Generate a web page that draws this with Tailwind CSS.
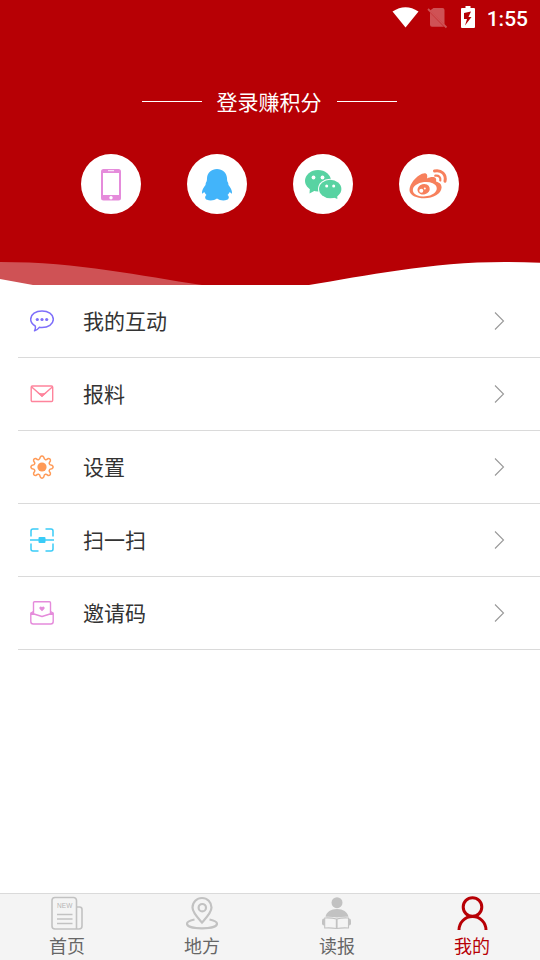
<!DOCTYPE html>
<html lang="zh-CN">
<head>
<meta charset="utf-8">
<meta name="viewport" content="width=device-width, initial-scale=1">
<title>我的</title>
<script src="https://cdn.jsdelivr.net/npm/@tailwindcss/browser@4"></script>
</head>
<body class="flex min-h-screen flex-col bg-white font-['Noto_Sans_CJK_SC',sans-serif] text-[#333333]">

<header class="flex flex-col bg-[#b70005] text-white">
  <div class="flex h-9 items-center justify-end pr-3">
    <svg class="h-9 w-7" viewBox="0 0 28 36" fill="#fff" aria-hidden="true"><path d="M.5 11.500Q13.500 3 26.500 11.500L13.500 27.500Z"/></svg>
    <svg class="ml-1 h-9 w-6" viewBox="0 0 24 36" aria-hidden="true"><path d="M9.500 8H18.500a2 2 0 0 1 2 2V24.500L6 10.500ZM6 12.500L20 26.800H8a2 2 0 0 1-2-2Z" fill="#cf5255"/><path d="M4 9L22.500 27.500" stroke="#cf5255" stroke-width="1.800"/></svg>
    <svg class="ml-3 h-9 w-5" viewBox="0 0 20 36" aria-hidden="true"><path d="M5.500 6h5V8H14a1 1 0 0 1 1 1V27a1 1 0 0 1-1 1H2a1 1 0 0 1-1-1V9a1 1 0 0 1 1-1H5.500Z" fill="#fff"/><path d="M11 11.500L4 13V19H7L5 25.500L11.500 17H8.500Z" fill="#b70005"/></svg>
    <time class="ml-[7px] pt-0.5 font-[Roboto,sans-serif] text-[21px] leading-6 font-medium">1:55</time>
  </div>

  <div class="mt-[49px] flex items-center justify-center gap-[15px] pr-0.5">
    <span class="h-px w-[60px] bg-white"></span>
    <h1 class="text-[21px] leading-8">登录赚积分</h1>
    <span class="h-px w-[60px] bg-white"></span>
  </div>

  <div class="mt-[37px] flex justify-center gap-[46px]">
    <button type="button" aria-label="手机登录" class="size-[60px] rounded-full bg-white">
      <svg class="size-full" viewBox="0 0 60 60" aria-hidden="true"><rect x="20" y="15" width="20" height="31.500" rx="2.500" fill="#e58bdb"/><path d="M22 19H38V41H22Z" fill="#fff"/><path d="M27 16.700h6" stroke="#fff" stroke-width=".9"/><circle cx="30" cy="43.800" r="1.700" fill="#fff"/></svg>
    </button>
    <button type="button" aria-label="QQ登录" class="size-[60px] rounded-full bg-white">
      <svg class="size-full" viewBox="0 0 60 60" aria-hidden="true"><path d="M30 15C35.500 15 39.500 18.500 40 24C40 26 40.300 27.500 41 28.500C41.500 29.500 41.300 30.500 41.500 31C43.500 33.500 45.200 36.500 45 39C44.800 40 44 39.500 43 38C42.500 38.200 42 39.500 40.500 41C42.500 42.500 42.200 45 40 45.800C37 47 32.500 46.500 30 44.500C27.500 46.500 23 47 20 45.800C17.800 45 17.500 42.500 19.500 41C18 39.500 17.500 38.200 17 38C16 39.500 15.200 40 15 39C14.800 36.500 16.500 33.500 18.500 31C18.700 30.500 18.500 29.500 19 28.500C19.700 27.500 20 26 20 24C20.500 18.500 24.500 15 30 15Z" fill="#42b4fa"/></svg>
    </button>
    <button type="button" aria-label="微信登录" class="size-[60px] rounded-full bg-white">
      <svg class="size-full" viewBox="0 0 60 60" aria-hidden="true"><g fill="#58d3a2"><ellipse cx="25" cy="26.700" rx="13" ry="10.700"/><path d="M17 33L16.500 39.500L23 36Z"/></g><ellipse cx="37.200" cy="35" rx="12.200" ry="10.200" fill="#fff"/><g fill="#58d3a2"><ellipse cx="37.200" cy="35" rx="11.200" ry="9.200"/><path d="M38.500 42.500L44.300 45V40Z"/></g><g fill="#fff"><circle cx="20.500" cy="23.500" r="1.900"/><circle cx="29.500" cy="23.500" r="1.900"/><circle cx="33.700" cy="32" r="1.500"/><circle cx="40.700" cy="32" r="1.500"/></g></svg>
    </button>
    <button type="button" aria-label="微博登录" class="size-[60px] rounded-full bg-white">
      <svg class="size-full" viewBox="0 0 60 60" aria-hidden="true"><path d="M10.500 36C10.500 30 17 22.500 23 19.800C27.500 18 29 20.500 28 24.500C32 22.500 38.500 22 37 27.500C39.500 28.300 42.700 29.500 42.600 33.500C42.300 40 34 44.300 25.500 44.300C17.500 44.300 10.500 41.500 10.500 36Z" fill="#f7805c"/><ellipse cx="25.800" cy="35.200" rx="12" ry="7.200" transform="rotate(-6 25.800 35.200)" fill="#fff"/><ellipse cx="24.600" cy="35.300" rx="6.200" ry="5.200" transform="rotate(-15 24.600 35.300)" fill="#f7805c"/><circle cx="22.300" cy="36.800" r="2" fill="#fff"/><circle cx="25.800" cy="34.500" r="1" fill="#fff"/><g fill="none" stroke="#f7805c" stroke-linecap="round"><path d="M35.500 17C42.500 15.500 47.500 20.500 46 27.200" stroke-width="3"/><path d="M36.300 21.700C39.800 21 42 23.500 41.300 26.500" stroke-width="2.200"/></g></svg>
    </button>
  </div>

  <svg class="mt-12 h-[23px] w-full" viewBox="0 0 540 23" preserveAspectRatio="none" aria-hidden="true">
    <path d="M0 0C80 0 140 14 202 23H0Z" fill="#cf5255"/>
    <path d="M0 17L33 23H0Z" fill="#fff"/>
    <path d="M309 23C365 14 430 0 505 0Q523 0 540 .8V23Z" fill="#fff"/>
  </svg>
</header>

<main class="flex-1">
  <nav aria-label="菜单" class="flex flex-col pl-[18px] text-[21px] leading-[30px]">
    <a href="#interact" class="flex items-center border-b border-[#dadada] py-5 pr-[35px] pl-3">
      <svg class="size-6" viewBox="0 0 24 24" fill="none" stroke="#7e6ffa" stroke-width="1.500" aria-hidden="true"><path d="M12 2C18 2 23.300 5.200 23.300 10.300S18 18.600 12 18.600C11 18.600 10 18.500 9.300 18.300C8 20.200 6.300 21.200 4.500 21.800C5.500 20 5.700 18.500 5.200 17C2.500 15.400.7 13 .7 10.300C.7 5.200 6 2 12 2Z" stroke-linejoin="round"/><g fill="#7e6ffa" stroke="none"><circle cx="7.300" cy="10.500" r="1.600"/><circle cx="12" cy="10.500" r="1.600"/><circle cx="16.700" cy="10.500" r="1.600"/></g></svg>
      <span class="ml-[29px] flex-1 pb-0.5">我的互动</span>
      <svg class="h-5 w-3" viewBox="0 0 12 20" fill="none" stroke="#999" stroke-width="1.100" aria-hidden="true"><path d="M2 1.500L10.500 10L2 18.500"/></svg>
    </a>
    <a href="#report" class="flex items-center border-b border-[#dadada] py-5 pr-[35px] pl-3">
      <svg class="size-6" viewBox="0 0 24 24" fill="none" stroke="#fe849c" stroke-width="1.400" aria-hidden="true"><rect x="1.200" y="4" width="21.500" height="15.500" rx="1.200"/><path d="M1.700 5L12 14L22.300 5"/><path d="M7 10.500Q12 12 17 10.500L12 15Z" fill="#fe849c" stroke="none"/></svg>
      <span class="ml-[29px] flex-1 pb-0.5">报料</span>
      <svg class="h-5 w-3" viewBox="0 0 12 20" fill="none" stroke="#999" stroke-width="1.100" aria-hidden="true"><path d="M2 1.500L10.500 10L2 18.500"/></svg>
    </a>
    <a href="#settings" class="flex items-center border-b border-[#dadada] py-5 pr-[35px] pl-3">
      <svg class="size-6" viewBox="0 0 24 24" fill="none" stroke="#ff9a57" stroke-width="1.500" stroke-linejoin="round" aria-hidden="true"><path d="M10.200 2.200Q12 0 13.800 2.200C14 4 14.500 4.600 15.400 4.800C16.300 5 17 4.500 18 3.600Q20.700 3.300 20.400 6C19.500 7 19 7.700 19.200 8.600C19.400 9.500 20 10 21.800 10.200Q24.500 12 21.800 13.800C20 14 19.400 14.500 19.200 15.400C19 16.300 19.500 17 20.400 18Q20.700 20.700 18 20.400C17 19.500 16.300 19 15.400 19.200C14.500 19.400 14 20 13.800 21.800Q12 24.500 10.200 21.800C10 20 9.500 19.400 8.600 19.200C7.700 19 7 19.500 6 20.400Q3.300 20.700 3.600 18C4.500 17 5 16.300 4.800 15.400C4.600 14.500 4 14 2.200 13.800Q-.5 12 2.200 10.200C4 10 4.600 9.500 4.800 8.600C5 7.700 4.500 7 3.600 6Q3.300 3.300 6 3.600C7 4.500 7.700 5 8.600 4.800C9.500 4.600 10 4 10.200 2.200Z"/><circle cx="12" cy="12" r="4.600" fill="#ff9a57" stroke="none"/></svg>
      <span class="ml-[29px] flex-1 pb-0.5">设置</span>
      <svg class="h-5 w-3" viewBox="0 0 12 20" fill="none" stroke="#999" stroke-width="1.100" aria-hidden="true"><path d="M2 1.500L10.500 10L2 18.500"/></svg>
    </a>
    <a href="#scan" class="flex items-center border-b border-[#dadada] py-5 pr-[35px] pl-3">
      <svg class="size-6" viewBox="0 0 24 24" fill="none" stroke="#3accf8" stroke-width="1.500" aria-hidden="true"><path d="M1 8.500V3a2 2 0 0 1 2-2H8.500M15.500 1H21a2 2 0 0 1 2 2V8.500M23 15.500V21a2 2 0 0 1-2 2H15.500M8.500 23H3a2 2 0 0 1-2-2V15.500M0 12H24"/><rect x="8.500" y="9" width="7" height="6" rx="1" fill="#3accf8" stroke="none"/></svg>
      <span class="ml-[29px] flex-1 pb-0.5">扫一扫</span>
      <svg class="h-5 w-3" viewBox="0 0 12 20" fill="none" stroke="#999" stroke-width="1.100" aria-hidden="true"><path d="M2 1.500L10.500 10L2 18.500"/></svg>
    </a>
    <a href="#invite" class="flex items-center border-b border-[#dadada] py-5 pr-[35px] pl-3">
      <svg class="size-6" viewBox="0 0 24 24" fill="none" stroke="#e58bdb" stroke-width="1.400" stroke-linejoin="round" aria-hidden="true"><path d="M3.500 12.500V1.700a1 1 0 0 1 1-1H19.500a1 1 0 0 1 1 1V12.500"/><path d="M3.500 10.500L.8 12V20.500a2.500 2.500 0 0 0 2.500 2.500H20.700a2.500 2.500 0 0 0 2.500-2.500V12L20.500 10.500M.8 12L12 15.500L23.200 12"/><path d="M12 10.300L9.500 7.800C8.700 6 11 4.800 12 6.300C13 4.800 15.300 6 14.500 7.800Z" fill="#e58bdb" stroke="none"/></svg>
      <span class="ml-[29px] flex-1 pb-0.5">邀请码</span>
      <svg class="h-5 w-3" viewBox="0 0 12 20" fill="none" stroke="#999" stroke-width="1.100" aria-hidden="true"><path d="M2 1.500L10.500 10L2 18.500"/></svg>
    </a>
  </nav>
</main>

<nav aria-label="底部导航" class="grid grid-cols-4 border-t border-[#dadada] bg-[#f4f4f4] pt-0.5 text-[18px] leading-[30px] text-[#666666]">
  <a href="#home" class="flex flex-col items-center pr-px">
    <svg class="size-[34px]" viewBox="0 0 34 34" fill="none" stroke="#c2c2c2" stroke-width="1.600" aria-hidden="true"><path d="M26.500 33H5a3 3 0 0 1-3-3V4.500a3 3 0 0 1 3-3H23.500a3 3 0 0 1 3 3V33H29a3 3 0 0 0 3-3V13.500a2.500 2.500 0 0 0-2.500-2.500H26.500"/><path d="M7 18.500H22.500M7 23H22.500M7 27.500H22.500"/><text x="14.700" y="12" text-anchor="middle" font-family="Liberation Sans, sans-serif" font-size="6.500" fill="#b4b4b4" stroke="none">NEW</text></svg>
    <span>首页</span>
  </a>
  <a href="#local" class="flex flex-col items-center pr-px">
    <svg class="size-[34px]" viewBox="0 0 34 34" fill="none" stroke="#c2c2c2" stroke-width="2.200" aria-hidden="true"><path d="M17 26.500C12.500 21.500 7.500 16.500 7.500 11.500a9.500 9.500 0 0 1 19 0C26.500 16.500 21.500 21.500 17 26.500Z"/><circle cx="17.300" cy="11.700" r="3.700"/><path d="M9.500 23.500C4.500 24.500 2 26 2 27.700C2 30.500 8.500 32.300 17 32.300S32 30.500 32 27.700C32 26 29.500 24.500 24.500 23.500"/></svg>
    <span>地方</span>
  </a>
  <a href="#paper" class="flex flex-col items-center pr-px">
    <svg class="size-[34px]" viewBox="0 0 34 34" aria-hidden="true"><g fill="#c2c2c2"><circle cx="17" cy="6.700" r="5.500"/><path d="M5.500 20.800C6.500 16 11 13 17 13S27.500 16 28.500 20.800Q22 20.500 17 21.500Q12 20.500 5.500 20.800Z"/><rect x="2" y="22.500" width="4" height="7" rx="2"/><rect x="27" y="22.500" width="4" height="7" rx="2"/></g><path d="M16.700 23Q10.500 21.500 4.700 22V32Q10.500 31.500 16.700 32.500Q22.500 31.500 28.500 32V22Q22.500 21.500 16.700 23Z" fill="#f4f4f4" stroke="#c2c2c2" stroke-width="1.100"/><path d="M16.700 23V32.500" stroke="#c2c2c2" stroke-width="1.800"/></svg>
    <span>读报</span>
  </a>
  <a href="#me" aria-current="page" class="flex flex-col items-center pr-px text-[#b70005]">
    <svg class="size-[34px]" viewBox="0 0 34 34" fill="none" stroke="#b70005" stroke-width="3" aria-hidden="true"><circle cx="17.500" cy="11" r="9.300"/><path d="M4 34C4 26.500 10 20.500 17.500 20.500S31 26.500 31 34"/></svg>
    <span>我的</span>
  </a>
</nav>
</body>
</html>
